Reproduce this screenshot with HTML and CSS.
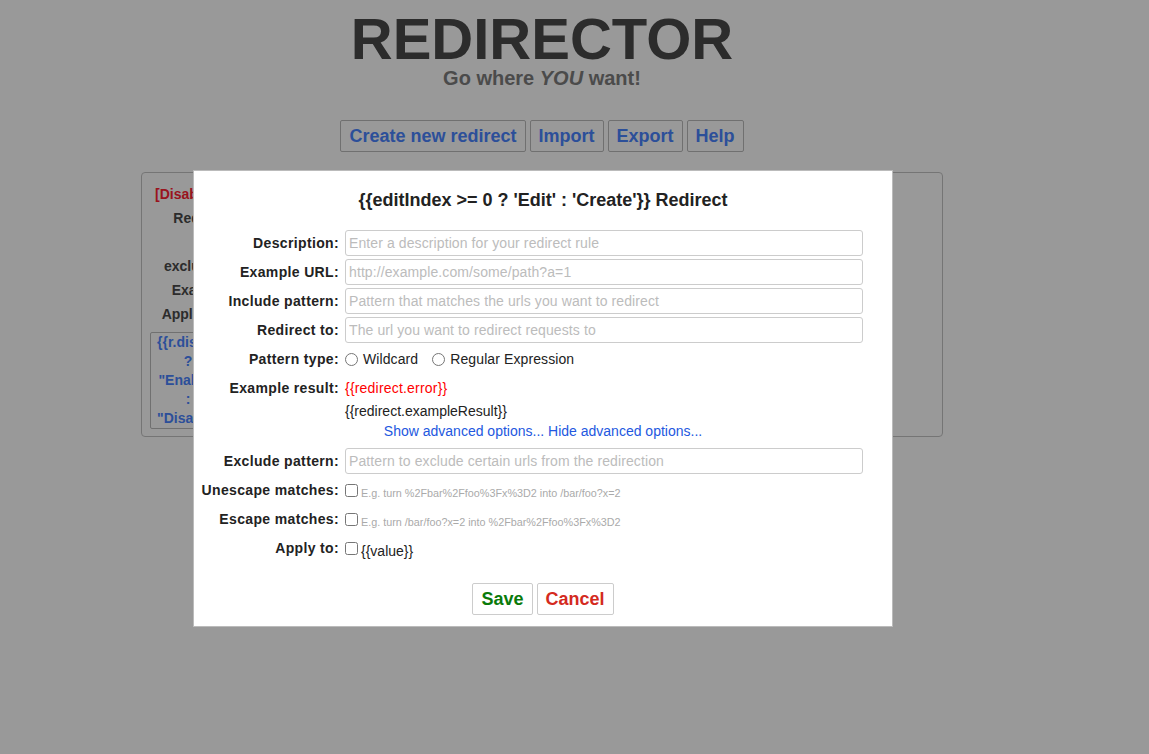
FILE: index.html
```html
<!DOCTYPE html>
<html lang="en">
<head>
    <meta charset="UTF-8">
    <meta name="viewport" content="width=device-width, initial-scale=1.0">
    <title>Redirector</title>
    <link rel="stylesheet" href="styles.css">
</head>
<body>

<div class="page">
    <!-- Header -->
    <h1>REDIRECTOR</h1>
    <p class="tagline">Go where <em>YOU</em> want!</p>

    <!-- Menu -->
    <div class="menu">
        <button class="menu-btn">Create new redirect</button>
        <button class="menu-btn">Import</button>
        <button class="menu-btn">Export</button>
        <button class="menu-btn">Help</button>
    </div>

    <!-- Redirect list -->
    <div class="redirect-list">
        <div class="redirect-title"><span class="disabled">[Disabled]</span></div>
        <div class="redirect-info">
            <span class="info-label">Redirect:</span><span class="info-value"></span>
            <span class="info-label">to:</span><span class="info-value"></span>
            <span class="info-label">excluding:</span><span class="info-value"></span>
            <span class="info-label">Example:</span><span class="info-value"></span>
            <span class="info-label">Applies to:</span><span class="info-value"></span>
        </div>
        <button class="toggle-btn">{{r.disabled ? "Enable" : "Disable"}}</button>
    </div>
</div>

<!-- Dim the page while the form is open -->
<div class="blur"></div>

<!-- Edit / create form -->
<div class="edit-form">
    <h3>{{editIndex &gt;= 0 ? 'Edit' : 'Create'}} Redirect</h3>

    <div class="form-row">
        <label for="description">Description:</label>
        <input type="text" id="description" placeholder="Enter a description for your redirect rule">
    </div>
    <div class="form-row">
        <label for="example_url">Example URL:</label>
        <input type="text" id="example_url" placeholder="http://example.com/some/path?a=1">
    </div>
    <div class="form-row">
        <label for="include_pattern">Include pattern:</label>
        <input type="text" id="include_pattern" placeholder="Pattern that matches the urls you want to redirect">
    </div>
    <div class="form-row">
        <label for="redirect_url">Redirect to:</label>
        <input type="text" id="redirect_url" placeholder="The url you want to redirect requests to">
    </div>
    <div class="form-row">
        <label>Pattern type:</label>
        <div class="choices">
            <label class="choice"><input type="radio" name="pattern_type" value="W"> Wildcard</label>
            <label class="choice"><input type="radio" name="pattern_type" value="R"> Regular Expression</label>
        </div>
    </div>
    <div class="form-row result-row">
        <label>Example result:</label>
        <div class="result">
            <div class="error">{{redirect.error}}</div>
            <div class="example-result">{{redirect.exampleResult}}</div>
        </div>
    </div>
    <div class="advanced-toggle">
        <a href="#">Show advanced options...</a> <a href="#">Hide advanced options...</a>
    </div>

    <!-- Advanced options -->
    <div class="form-row">
        <label for="exclude_pattern">Exclude pattern:</label>
        <input type="text" id="exclude_pattern" placeholder="Pattern to exclude certain urls from the redirection">
    </div>
    <div class="form-row">
        <label>Unescape matches:</label>
        <input type="checkbox">
        <span class="hint">E.g. turn %2Fbar%2Ffoo%3Fx%3D2 into /bar/foo?x=2</span>
    </div>
    <div class="form-row">
        <label>Escape matches:</label>
        <input type="checkbox">
        <span class="hint">E.g. turn /bar/foo?x=2 into %2Fbar%2Ffoo%3Fx%3D2</span>
    </div>
    <div class="form-row">
        <label>Apply to:</label>
        <input type="checkbox">
        <span class="apply-value">{{value}}</span>
    </div>

    <div class="form-buttons">
        <button class="save-btn">Save</button>
        <button class="cancel-btn">Cancel</button>
    </div>
</div>

</body>
</html>
```

FILE: styles.css
```css
body {
    font-family: "Liberation Sans", Arial, sans-serif;
    background-color: #fff;
    margin: 0;
    padding: 0;
}
.page {
    width: 1084px;
    text-align: center;
}
h1 {
    font-size: 58px;
    line-height: 58px;
    font-weight: bold;
    color: #4a4a4a;
    margin: 0;
    padding-top: 10px;
}
.tagline {
    font-size: 20px;
    line-height: 21px;
    font-weight: bold;
    color: #7d7d7d;
    margin: 0;
}
.menu {
    display: flex;
    justify-content: center;
    gap: 4px;
    margin-top: 31px;
}
.menu-btn {
    font-family: inherit;
    font-size: 18px;
    font-weight: bold;
    line-height: 30px;
    padding: 0 8px;
    color: #4a84ff;
    background-color: #fff;
    border: 1px solid #bbb;
    border-radius: 2px;
}

/* list of saved redirects */
.redirect-list {
    width: 802px;
    height: 265px;
    box-sizing: border-box;
    margin: 20px auto 0;
    padding: 9px 8px;
    border: 1px solid #c4c4c4;
    border-radius: 4px;
    text-align: left;
    font-size: 14px;
    font-weight: bold;
    color: #4a4a4a;
}
.redirect-title {
    line-height: 24px;
    padding-left: 5px;
}
.disabled {
    color: #ff2233;
}
.redirect-info {
    display: grid;
    grid-template-columns: 84px 1fr;
    grid-auto-rows: 24px;
    column-gap: 6px;
    line-height: 24px;
}
.info-label {
    text-align: right;
}
.info-value {
    font-weight: normal;
}
.toggle-btn {
    display: block;
    width: 76px;
    margin-top: 6px;
    padding: 0 6px;
    font-family: inherit;
    font-size: 14px;
    font-weight: bold;
    line-height: 19px;
    color: #4a84ff;
    background-color: #fff;
    border: 1px solid #bbb;
    border-radius: 2px;
    text-align: center;
}

.blur {
    position: fixed;
    top: 0;
    left: 0;
    right: 0;
    bottom: 0;
    background-color: rgba(0, 0, 0, 0.4);
}

/* edit form */
.edit-form {
    position: absolute;
    top: 170px;
    left: 193px;
    width: 700px;
    box-sizing: border-box;
    padding: 18px 0 11px;
    background-color: #fff;
    border: 1px solid #bbb;
    font-size: 14px;
    color: #222;
}
.edit-form h3 {
    font-size: 18px;
    line-height: 22px;
    text-align: center;
    margin: 0 0 19px;
}
.form-row {
    display: flex;
    align-items: center;
    min-height: 26px;
    margin-bottom: 3px;
}
.form-row > label {
    width: 145px;
    margin-right: 6px;
    text-align: right;
    font-weight: bold;
    letter-spacing: 0.35px;
}
.form-row input[type="text"] {
    width: 518px;
    height: 26px;
    box-sizing: border-box;
    padding: 0 3px;
    border: 1px solid #ccc;
    border-radius: 3px;
    font-family: inherit;
    font-size: 14px;
    letter-spacing: 0.1px;
}
.form-row input::placeholder {
    color: #bcbcbc;
}
.form-row input[type="checkbox"],
.form-row input[type="radio"] {
    width: 13px;
    height: 13px;
    margin: 0;
}
.choices {
    display: flex;
    letter-spacing: 0.1px;
}
.choice {
    display: flex;
    align-items: center;
    gap: 5px;
    margin-right: 14px;
}
.result-row {
    align-items: flex-start;
    margin-bottom: 0;
}
.result-row > label {
    line-height: 26px;
}
.error {
    color: #f00;
    line-height: 26px;
    letter-spacing: 0.2px;
}
.example-result {
    line-height: 20px;
}
.advanced-toggle {
    text-align: center;
    line-height: 20px;
    margin-bottom: 7px;
}
.advanced-toggle a {
    color: #2358e0;
    text-decoration: none;
}
.hint {
    font-size: 10.8px;
    color: #aaa;
    margin-left: 3px;
    padding-top: 6px;
}
.apply-value {
    margin-left: 3px;
    padding-top: 6px;
}
.form-buttons {
    display: flex;
    justify-content: center;
    gap: 4px;
    margin-top: 22px;
}
.form-buttons button {
    font-family: inherit;
    font-size: 18px;
    font-weight: bold;
    line-height: 30px;
    padding: 0 8px;
    background-color: #fff;
    border: 1px solid #ccc;
    border-radius: 2px;
}
.save-btn {
    color: #0a7a0a;
}
.cancel-btn {
    color: #d42a1e;
}
```
